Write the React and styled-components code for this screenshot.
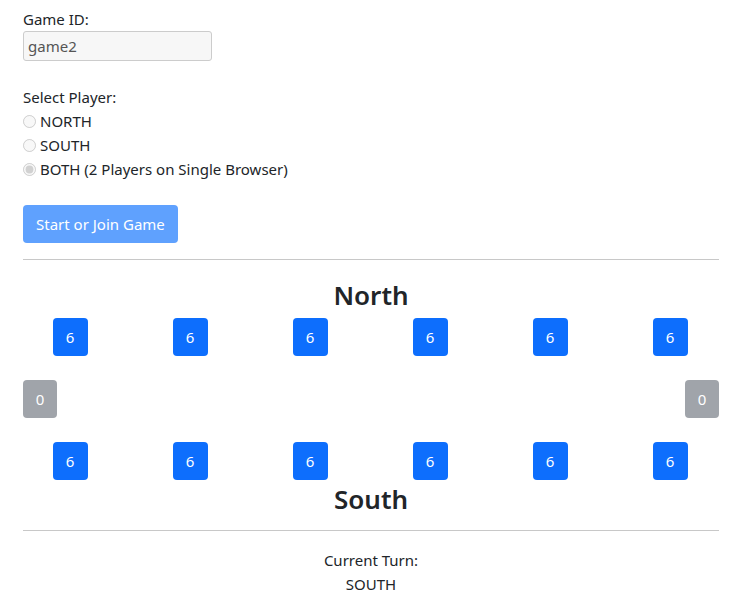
import React from 'react'
import styled, { createGlobalStyle } from 'styled-components'

const GlobalStyle = createGlobalStyle`
  * { box-sizing: border-box; }
  body {
    margin: 0;
    background: #fff;
    color: #212529;
    font-family: "Noto Sans", "Open Sans", sans-serif;
    font-size: 15px;
    line-height: 24px;
  }
`

const northPits = [6, 6, 6, 6, 6, 6]
const southPits = [6, 6, 6, 6, 6, 6]

function App() {
  return (
    <>
      <GlobalStyle />
      <Page>
        <Field>
          <Label>Game ID:</Label>
          <TextInput value="game2" disabled readOnly />
        </Field>

        <Field>
          <Label>Select Player:</Label>
          <RadioRow>
            <Radio type="radio" name="player" disabled />
            NORTH
          </RadioRow>
          <RadioRow>
            <Radio type="radio" name="player" disabled />
            SOUTH
          </RadioRow>
          <RadioRow>
            <Radio type="radio" name="player" disabled defaultChecked />
            BOTH (2 Players on Single Browser)
          </RadioRow>
        </Field>

        <StartButton disabled>Start or Join Game</StartButton>

        <Rule $top={16} />

        <Board>
          <Side $top={18} $bottom={6}>North</Side>
          <PitRow>
            {northPits.map((n, i) => (
              <PitCell key={i}>
                <Pit>{n}</Pit>
              </PitCell>
            ))}
          </PitRow>
          <StoreRow>
            <Store>0</Store>
            <Store>0</Store>
          </StoreRow>
          <PitRow>
            {southPits.map((n, i) => (
              <PitCell key={i}>
                <Pit>{n}</Pit>
              </PitCell>
            ))}
          </PitRow>
          <Side $top={2} $bottom={0}>South</Side>
        </Board>

        <Rule $top={14} />

        <Turn>
          <div>Current Turn:</div>
          <div>SOUTH</div>
        </Turn>
      </Page>
    </>
  )
}

export default App

const Page = styled.div`
  width: 696px;
  margin: 0 23px;
  padding-top: 7px;
`
const Field = styled.div`
  display: flex;
  flex-direction: column;
  align-items: flex-start;
  margin-bottom: 24px;
`
const Label = styled.label`
  display: block;
`
const TextInput = styled.input`
  width: 189px;
  height: 30px;
  padding: 2px 4px;
  border: 1px solid #cccccc;
  border-radius: 3px;
  background: #f7f7f7;
  color: #555;
  font-family: inherit;
  font-size: 15px;
`
const RadioRow = styled.label`
  display: flex;
  align-items: center;
  gap: 4px;
  color: #212529;
`
const Radio = styled.input`
  width: 13px;
  height: 13px;
  margin: 0;
`
const StartButton = styled.button`
  display: block;
  height: 38px;
  padding: 0 13px;
  border: none;
  border-radius: 4px;
  background: #5fa1fe;
  color: #fff;
  font-family: inherit;
  font-size: 15px;
  margin-top: 2px;
`
const Rule = styled.hr`
  margin: ${p => p.$top}px 0 0;
  border: none;
  border-top: 1px solid #c8c8c8;
`
const Board = styled.div`
  display: flex;
  flex-direction: column;
  align-items: stretch;
`
const Side = styled.h3`
  margin: ${p => p.$top}px 0 ${p => p.$bottom}px;
  text-align: center;
  font-size: 26px;
  font-weight: 600;
  line-height: 34px;
`
const PitRow = styled.div`
  display: grid;
  grid-template-columns: repeat(6, 120px);
  margin: 0 -11px 0 -13px;
`
const PitCell = styled.div`
  display: flex;
  justify-content: center;
`
const Pit = styled.div`
  width: 35px;
  height: 38px;
  border-radius: 4px;
  background: #0d6efd;
  color: #fff;
  display: flex;
  align-items: center;
  justify-content: center;
  font-size: 15px;
`
const StoreRow = styled.div`
  display: flex;
  justify-content: space-between;
  margin: 24px 0;
`
const Store = styled.div`
  width: 34px;
  height: 38px;
  border-radius: 4px;
  background: #a0a4aa;
  color: #fff;
  display: flex;
  align-items: center;
  justify-content: center;
  font-size: 15px;
`
const Turn = styled.div`
  text-align: center;
  padding-top: 17px;
`
